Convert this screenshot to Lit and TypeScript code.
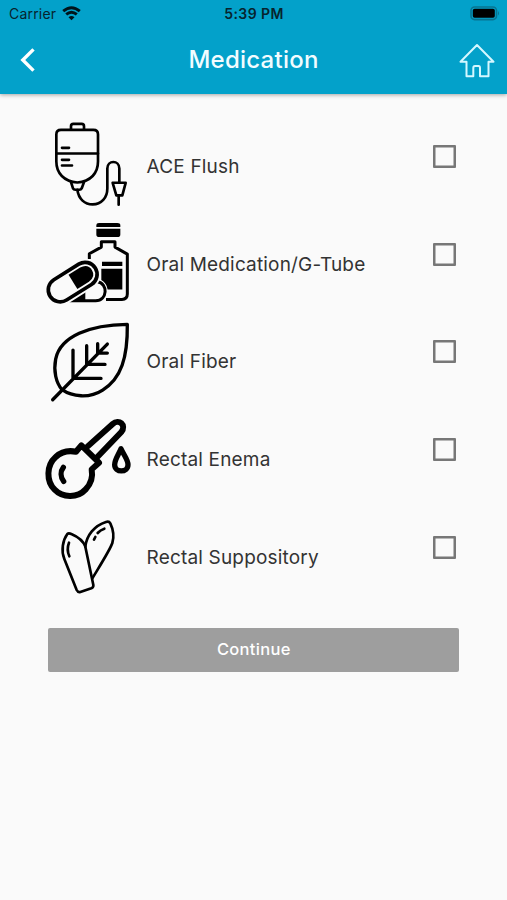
import { LitElement, html, svg, css } from "lit";
import { customElement, property } from "lit/decorators.js";

const icons = {
  flush: {
    view: "0 21.6 300 293.1",
    art: svg`<g stroke-width="8">
      <path d="M93 58V49Q93 42 100 42H125Q132 42 132 49V58"/>
      <path d="M63 60H160Q174 60 174 74V155C174 190 152 215 112 218C72 215 49 190 49 155V74Q49 60 63 60Z"/>
      <path d="M49 131H174M66 114H87M66 150H87M66 167H96"/>
      <path d="M93 217L99 236Q101 240 106 240H118Q123 240 125 236L132 217"/>
      <path d="M112 240C116 268 134 284 158 284C184 284 202 264 202 236V176C202 150 238 150 238 176V218"/>
      <path d="M218 219H257L247 257H229ZM236 258V285"/></g>`,
  },
  oral: {
    view: "0 8.7 300 293.1",
    art: svg`<g class="solid"><path d="M169 45V39Q169 33 177 33H232Q241 33 241 39V45ZM169 50H241V67Q241 75 232 75H178Q169 75 169 67Z"/>
      <path d="M186 149H247V162H186ZM184 170H247V232H203Q200 214 184 204Z"/></g>
      <path stroke-width="9" stroke-linecap="butt" d="M148 141V125L184 105V89H225V105L262 126V246Q262 262 246 262H198"/>
      <path stroke-width="9" d="M90 266H167C203 266 205 213 172 209"/>
      <path class="solid" d="M80 268L130 228L136 233V268Z"/>
      <g transform="rotate(-32 98 210)"><rect class="paper halo" x="18" y="174" width="160" height="72" rx="36"/>
      <rect class="paper" x="18" y="174" width="160" height="72" rx="36" stroke-width="11"/>
      <path class="solid" d="M99 185H140Q166 187 166 210Q166 233 140 235H99Z"/></g>`,
  },
  fiber: {
    view: "0 1.8 300 293.1",
    art: svg`<path stroke-width="10" d="M262 36C150 37 61 72 47 140C40 176 48 211 66 232C96 253 148 259 188 233C244 198 263 135 262 36Z"/>
      <path stroke-width="10" d="M38 262L202 95M99 113V198H183M140 100V156H195M173 94V122H202"/>`,
  },
  enema: {
    view: "0 0.9 300 293.1",
    art: svg`<g stroke-width="18">
      <path d="M124 107L108 126C88 122 64 126 47 142C19 167 18 214 44 240C69 266 113 265 137 239C154 221 159 201 155 179L177 159Z"/>
      <path d="M143 110L218 43C237 26 260 46 244 67L172 142"/>
      <path stroke-width="16" d="M70 173C61 185 61 202 71 215"/>
      <path stroke-width="16" d="M243 117C235 136 224 149 224 165C224 190 264 190 264 165C264 149 251 136 243 117Z"/></g>`,
  },
  suppository: {
    view: "0 -6 300 293.1",
    art: svg`<g stroke-width="8">
      <path d="M82 72Q86 68 94 72C113 80 130 93 136 110L160 225Q161 232 154 235L121 246Q114 248 110 240L73 147C63 122 68 91 82 72Z"/>
      <path d="M136 110C140 76 163 47 198 36Q207 33 211 40C220 59 223 79 217 99C211 118 178 170 157 205"/>
      <path d="M87 98Q79 118 88 139M173 69Q181 60 193 56M162 89L166 81"/></g>`,
  },
};

type IconName = keyof typeof icons;

@customElement("status-bar")
class StatusBar extends LitElement {
  static styles = css`
    :host { display: grid; grid-template-columns: 1fr auto 1fr; align-items: center; height: 27px; padding: 0 7px 0 9px; font-size: 14px; color: #07242e; }
    .carrier { display: flex; align-items: center; gap: 6px; letter-spacing: 0.2px; }
    .wifi { width: 19px; height: 15px; margin-top: -1px; }
    .time { font-weight: 600; font-size: 14px; letter-spacing: 0.4px; margin-right: 1px; }
    .battery { justify-self: end; width: 30px; height: 15px; margin-top: -1px; }
  `;
  render() {
    return html`
      <div class="carrier"><span>Carrier</span>
        <svg class="wifi" viewBox="0 0 19 15" fill="none" stroke="#00141b" stroke-width="2.9">
          <path d="M1.2 5.2Q9.5-1.8 17.8 5.2M4.2 8.4Q9.5 4 14.8 8.4"/>
          <path d="M6.5 11.2Q9.5 8.7 12.5 11.2L9.5 14.2Z" fill="#00141b" stroke="none"/>
        </svg>
      </div>
      <div class="time">5:39 PM</div>
      <svg class="battery" viewBox="0 0 30 15">
        <rect x="1" y="1" width="25.5" height="12.6" rx="3.6" fill="none" stroke="#087491" stroke-width="1.6"/>
        <rect x="2.8" y="2.8" width="22" height="9" rx="1.8" fill="#000"/>
        <path d="M28 5Q30 7.3 28 9.6Z" fill="#087491"/>
      </svg>`;
  }
}

@customElement("medication-row")
class MedicationRow extends LitElement {
  @property() label = "";
  @property() icon: IconName = "flush";
  static styles = css`
    :host { display: flex; align-items: center; height: 97.7px; padding: 0 51px 0 40px; }
    .icon { width: 100px; height: 97.7px; flex: none; fill: none; stroke: #000; stroke-linecap: round; stroke-linejoin: round; }
    .solid { fill: #000; stroke: none; }
    .paper { fill: #fafafa; }
    .halo { stroke: #fafafa; stroke-width: 22px; }
    .label { flex: 1; margin-left: 6.6px; padding-top: 0.6px; font-size: 19px; letter-spacing: 0.17px; color: #333; white-space: nowrap; }
    .box { width: 23px; height: 23px; margin-bottom: 19.6px; box-shadow: inset 0 0 0 2.5px #777; border-radius: 1px; }
  `;
  render() {
    const { view, art } = icons[this.icon];
    return html`<svg class="icon" viewBox=${view}>${art}</svg>
      <span class="label">${this.label}</span>
      <span class="box" role="checkbox" aria-checked="false"></span>`;
  }
}

@customElement("app-root")
class AppRoot extends LitElement {
  static styles = css`
    :host { display: block; height: 900px; overflow: hidden; background: #fafafa; font-family: Inter, "Liberation Sans", sans-serif; }
    header { height: 94px; background: #03a1ca; box-shadow: 0 1px 4px rgba(0, 0, 0, 0.35); }
    .bar { display: grid; grid-template-columns: 1fr auto 1fr; align-items: center; height: 65px; padding: 0 11px 0 19px; }
    h1 { margin: 0 8px 0 0; font-size: 24px; font-weight: 500; letter-spacing: 0.25px; color: #f2fcff; line-height: 65px; }
    .back { width: 18px; height: 26px; }
    .home { justify-self: end; width: 38px; height: 36px; margin-top: 2px; }
    main { padding-top: 23.4px; }
    .continue { display: block; width: 411px; height: 44px; margin: 21.9px 0 0 48.3px; padding: 0 0 2px; border: 0; border-radius: 2px; background: #9e9e9e; color: #fff; font: 500 16.5px Inter, "Liberation Sans", sans-serif; letter-spacing: 0.3px; }
  `;
  render() {
    const rows: [string, IconName][] = [
      ["ACE Flush", "flush"],
      ["Oral Medication/G-Tube", "oral"],
      ["Oral Fiber", "fiber"],
      ["Rectal Enema", "enema"],
      ["Rectal Suppository", "suppository"],
    ];
    return html`
      <header>
        <status-bar></status-bar>
        <div class="bar">
          <svg class="back" viewBox="0 0 18 26" fill="none" stroke="#fff" stroke-width="3.4"><path d="M14.5 2.4L3.8 13L14.5 23.6"/></svg>
          <h1>Medication</h1>
          <svg class="home" viewBox="0 0 38 36" fill="none" stroke="#d5f7ff" stroke-width="2" stroke-linejoin="round">
            <path d="M19 2L2.5 18.8H8.5V33.3H15.3V25Q15.3 23 17 23H20.5Q22 23 22 25V33.3H30.5V18.8H35.5Z"/>
          </svg>
        </div>
      </header>
      <main>
        ${rows.map(([label, icon]) => html`<medication-row .label=${label} .icon=${icon}></medication-row>`)}
        <button class="continue">Continue</button>
      </main>`;
  }
}
